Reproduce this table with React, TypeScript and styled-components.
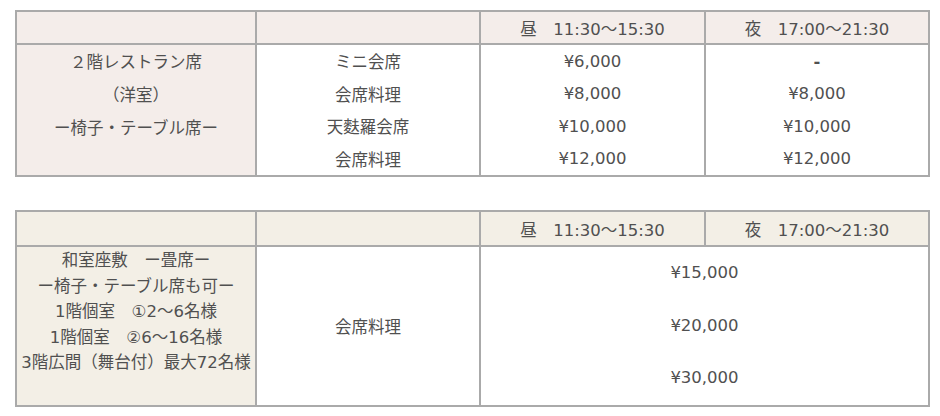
import React from "react";
import styled, { createGlobalStyle } from "styled-components";

const GlobalStyle = createGlobalStyle`
  body {
    margin: 0;
    background: #fff;
    font-family: "DejaVu Sans", "Noto Sans CJK JP", sans-serif;
    color: #505050;
  }
`;

const lunchRows = [
  { course: "ミニ会席", lunch: "¥6,000", dinner: "-" },
  { course: "会席料理", lunch: "¥8,000", dinner: "¥8,000" },
  { course: "天麩羅会席", lunch: "¥10,000", dinner: "¥10,000" },
  { course: "会席料理", lunch: "¥12,000", dinner: "¥12,000" },
];

const roomLines = [
  "和室座敷　ー畳席ー",
  "ー椅子・テーブル席も可ー",
  "1階個室　①2～6名様",
  "1階個室　②6～16名様",
  "3階広間（舞台付）最大72名様",
];

const prices = ["¥15,000", "¥20,000", "¥30,000"];

export default function App() {
  return (
    <>
      <GlobalStyle />
      <Page>
        {/* 2階レストラン席 */}
        <PriceTable>
          <colgroup>
            <col style={{ width: 240 }} />
            <col style={{ width: 224 }} />
            <col style={{ width: 225 }} />
            <col style={{ width: 224 }} />
          </colgroup>
          <thead>
            <tr>
              <HeadCell $tone="rose" />
              <HeadCell $tone="rose" />
              <HeadCell $tone="rose">昼　11:30～15:30</HeadCell>
              <HeadCell $tone="rose">夜　17:00～21:30</HeadCell>
            </tr>
          </thead>
          <tbody>
            {lunchRows.map((row, i) => (
              <tr key={i}>
                {i === 0 && (
                  <RoomCell $tone="rose" rowSpan={4} $lineHeight={33}>
                    ２階レストラン席
                    <br />
                    （洋室）
                    <br />
                    ー椅子・テーブル席ー
                  </RoomCell>
                )}
                <Cell>{row.course}</Cell>
                <Cell>{row.lunch}</Cell>
                <Cell>{row.dinner === "-" ? <Dash>-</Dash> : row.dinner}</Cell>
              </tr>
            ))}
          </tbody>
        </PriceTable>

        {/* 和室 */}
        <PriceTable>
          <colgroup>
            <col style={{ width: 240 }} />
            <col style={{ width: 224 }} />
            <col style={{ width: 225 }} />
            <col style={{ width: 224 }} />
          </colgroup>
          <thead>
            <tr>
              <HeadCell $tone="cream" $tall />
              <HeadCell $tone="cream" $tall />
              <HeadCell $tone="cream" $tall>昼　11:30～15:30</HeadCell>
              <HeadCell $tone="cream" $tall>夜　17:00～21:30</HeadCell>
            </tr>
          </thead>
          <tbody>
            <tr>
              <RoomCell $tone="cream" $lineHeight={25.6}>
                {roomLines.map((line) => (
                  <RoomLine key={line}>{line}</RoomLine>
                ))}
              </RoomCell>
              <Cell>会席料理</Cell>
              <PriceCell colSpan={2}>
                {prices.map((p) => (
                  <PriceLine key={p}>{p}</PriceLine>
                ))}
              </PriceCell>
            </tr>
          </tbody>
        </PriceTable>
      </Page>
    </>
  );
}

const tones = {
  rose: "#f4edea",
  cream: "#f3efe6",
};

const Page = styled.div`
  display: flex;
  flex-direction: column;
  gap: 33px;
  padding: 10px 0 0 15px;
`;

const PriceTable = styled.table`
  width: 913px;
  table-layout: fixed;
  border-collapse: collapse;
  border: 2px solid #aaa;
  font-size: 16.5px;
  color: #505050;
`;

const HeadCell = styled.th<{ $tone: keyof typeof tones; $tall?: boolean }>`
  background: ${(p) => tones[p.$tone]};
  border: 2px solid #aaa;
  height: ${(p) => (p.$tall ? 33 : 31)}px;
  padding: 0;
  font-weight: normal;
  text-align: center;
  vertical-align: middle;
`;

const Cell = styled.td`
  border-left: 2px solid #aaa;
  border-right: 2px solid #aaa;
  height: 32.5px;
  padding: 0;
  text-align: center;
  vertical-align: middle;
`;

const RoomCell = styled.td<{ $tone: keyof typeof tones; $lineHeight: number }>`
  background: ${(p) => tones[p.$tone]};
  border: 2px solid #aaa;
  padding: 1px 0 0;
  line-height: ${(p) => p.$lineHeight}px;
  text-align: center;
  vertical-align: top;
  white-space: nowrap;
`;

const RoomLine = styled.div`
  &:last-child {
    padding-bottom: 28px;
  }
`;

const PriceCell = styled.td`
  border: 2px solid #aaa;
  padding: 0;
  text-align: center;
  vertical-align: middle;
`;

const PriceLine = styled.div`
  line-height: 52.5px;
`;

const Dash = styled.span`
  font-weight: bold;
`;
